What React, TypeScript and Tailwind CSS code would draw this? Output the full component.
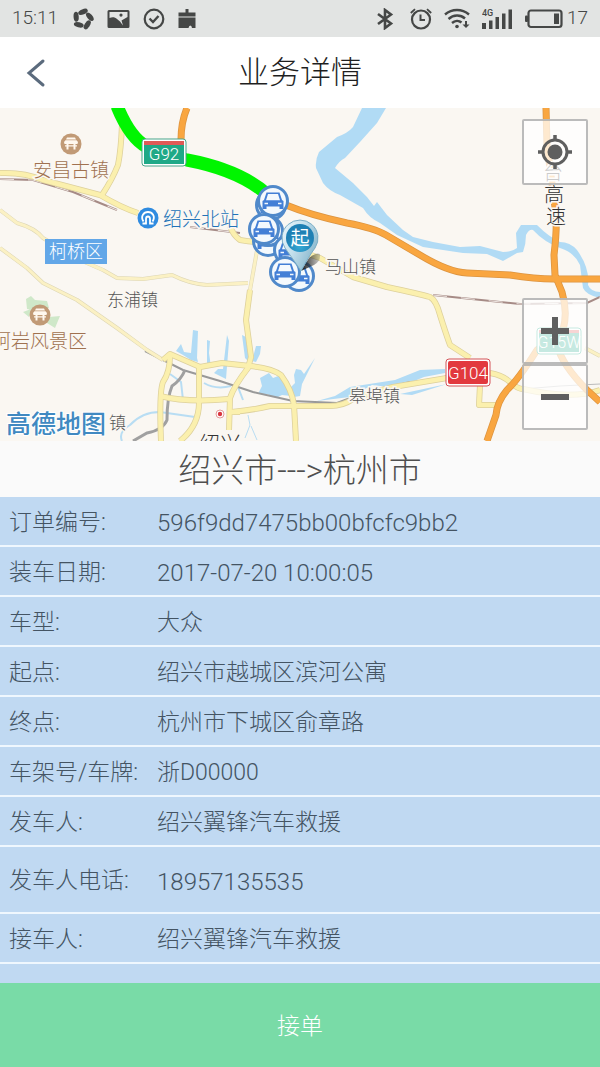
import React from 'react';

const orderRows = [
  { label: '订单编号:', value: '596f9dd7475bb00bfcfc9bb2', numeric: true },
  { label: '装车日期:', value: '2017-07-20 10:00:05', numeric: true },
  { label: '车型:', value: '大众' },
  { label: '起点:', value: '绍兴市越城区滨河公寓' },
  { label: '终点:', value: '杭州市下城区俞章路' },
  { label: '车架号/车牌:', value: '浙D00000' },
  { label: '发车人:', value: '绍兴翼锋汽车救援' },
  { label: '发车人电话:', value: '18957135535', numeric: true, tall: true },
  { label: '接车人:', value: '绍兴翼锋汽车救援' },
];

const StatusBar: React.FC = () => (
  <div className="flex h-[37px] shrink-0 items-center justify-between bg-[#e2e4e3] px-3 text-[#454746]">
    <div className="flex items-center gap-[13px]">
      <span className="w-[47px] text-[19px] whitespace-nowrap">15:11</span>
      <svg className="size-[22px]" viewBox="0 0 22 22">
        <g fill="currentColor">
          {[0, 72, 144, 216, 288].map((angle) => (
            <ellipse key={angle} cx="11" cy="3.800" rx="5" ry="2.600" transform={`rotate(${angle} 11 11) rotate(-22 11 3.800)`} />
          ))}
        </g>
      </svg>
      <svg className="h-[20px] w-[23px]" viewBox="0 0 23 20">
        <path
          fill="currentColor"
          fillRule="evenodd"
          d="M2 1 H21 Q22.500 1 22.500 2.500 V17.500 Q22.500 19 21 19 H2 Q.5 19 .5 17.500 V2.500 Q.5 1 2 1Z M2.500 3 V9 C5 8 8 8 10 10 L13 12.500 L16 16.500 L14.500 11.500 L20.500 8 V3Z M14 4.500 a1.600 1.600 0 1 1 0 3.200 a1.600 1.600 0 1 1 0-3.200Z"
        />
      </svg>
      <svg className="size-[22px]" viewBox="0 0 22 22" fill="none" stroke="currentColor">
        <circle cx="11" cy="11" r="9.300" strokeWidth="2.200" />
        <path d="M6.500 10.500 L10 14 L15.500 8" strokeWidth="2.400" />
      </svg>
      <svg className="h-[20px] w-[18px]" viewBox="0 0 18 20" fill="currentColor">
        <path d="M7.500 0 h3 v3.500 h7 v4 H.5 V3.500 h7Z M.5 8.500 h17 v10.500 h-3.500 q-.2-2.500-1.800-2.500 q-1.200 0-1.700 2.500 H.5Z" />
      </svg>
    </div>
    <div className="flex items-center">
      <svg className="mr-4 h-[22px] w-[18px]" viewBox="0 0 18 22" fill="none" stroke="currentColor" strokeWidth="2.600">
        <path d="M2 6 L15 15.500 L9 20 V2 L15 6.500 L2 16" />
      </svg>
      <svg className="mr-3 size-[22px]" viewBox="0 0 22 22" fill="none" stroke="currentColor">
        <circle cx="11" cy="11.500" r="9" strokeWidth="2.200" />
        <path d="M10.500 6.500 V12 H15" strokeWidth="2" />
        <path d="M.8 5 L5 1.200 M17 1.200 L21.200 5" strokeWidth="1.800" />
      </svg>
      <svg className="mr-3 h-[22px] w-[26px]" viewBox="0 0 26 22" fill="none" stroke="currentColor" strokeWidth="2.400">
        <path d="M1 6.500 C8 .5 18 .5 25 6.500" />
        <path d="M4.500 11 C9.500 6.500 16.500 6.500 21 10.500" />
        <path d="M8 15 C11 12.300 15 12.300 17.500 14.500" />
        <circle cx="13" cy="18.500" r="1.800" fill="currentColor" stroke="none" />
        <path d="M22 13 V17" strokeWidth="2" />
        <path d="M18.500 16.500 h7 L22 20Z" fill="currentColor" stroke="none" />
      </svg>
      <svg className="mr-3 h-[22px] w-[31px]" viewBox="0 0 31 22" fill="currentColor">
        <text x="0" y="8" fontSize="9" fontWeight="500" className="font-['Roboto',sans-serif]">4G</text>
        <path d="M0 15 h4 v6 h-4Z M7 12.500 h3.500 v8.500 h-3.500Z M13.500 9 h3.500 v12 h-3.500Z M20 5.500 h3.500 v15.500 h-3.500Z M26.500 1.500 h3.500 v19.500 h-3.500Z" />
      </svg>
      <svg className="mr-1 h-[20px] w-[38px]" viewBox="0 0 38 20">
        <rect x="3.500" y="1.500" width="33" height="16.500" rx="2.500" fill="none" stroke="currentColor" strokeWidth="2.200" />
        <rect x="0" y="6.500" width="3" height="6.500" rx="1" fill="currentColor" />
        <rect x="29" y="4.500" width="5" height="10.500" fill="currentColor" />
      </svg>
      <span className="text-[19px]">17</span>
    </div>
  </div>
);

const CarPin: React.FC<{ x: number; y: number }> = ({ x, y }) => (
  <g transform={`translate(${x} ${y})`}>
    <circle r="14.500" fill="#f4f9fd" stroke="#5089ca" strokeWidth="3" />
    <path
      fill="#437fd6"
      fillRule="evenodd"
      d="M-6.500-8.500 H6.500 L9-1 L10.500 0 V8 H6.500 V5.500 H-6.500 V8 H-10.500 V0 L-9-1Z M-5-7 L-7-.8 H7 L5-7Z M-8.500 1.700 h3.500 v1.500 h-3.500Z M5 1.700 h3.500 v1.500 h-3.500Z"
    />
  </g>
);

const TempleIcon: React.FC<{ x: number; y: number }> = ({ x, y }) => (
  <g transform={`translate(${x} ${y})`}>
    <circle r="10.500" fill="#c19a76" />
    <path d="M-4-6.500 H4 L5-4.500 H-5Z M-7-2 L-5.500-3.800 H5.500 L7-2 L6.500 0 H-6.500Z M-4.500 0 h2 v5.500 h-2Z M2.500 0 h2 v5.500 h-2Z M-6 1.200 H6 V2.500 H-6Z" fill="#fff8ef" />
  </g>
);

const yellowRoads = [
  'M0 173 Q24 172 43 180 L100 195 Q122 208 138 213',
  'M230 226 Q233 235 240 240 Q258 243 275 243 L320 258 L353 277 L387 287 Q420 294 430 297 Q436 300 440 315 Q446 334 450 345 L470 358',
  'M122 125 Q121 150 118 165 Q112 180 102 195',
  'M490 373 Q503 375 511 383 Q518 389 523 389 Q572 400 600 390',
  'M480 385 L479 405 H500',
  'M447 378 L393 387 Q366 394 353 399 Q343 406 330 406 L270 406 Q253 410 232 412',
  'M250 290 L246 320 L251 357 L248 368 Q234 386 230 398 L229 430',
  'M163 360 L170 354 L200 367 L222 363 L250 366 Q272 368 281 375 Q292 390 294 405 L296 441',
  'M170 355 Q170 372 163 382 Q159 392 161 441',
  'M199 367 V400 Q200 425 180 441',
  'M160 396 Q188 403 229 399',
  'M229 412 H240',
];

const thinRoads = [
  'M0 210 L17 223 Q35 228 43 238 L80 260 L103 270 L117 278 L143 279 L172 275 Q190 284 207 285 L248 283',
  'M0 248 L27 268 L43 283 L77 300 L117 328 L147 350 L163 360',
  'M258 245 L250 290',
  'M585 348 L600 356',
];

const orangeRoads = [
  'M187 108 Q181 122 181 140',
  'M286 205 Q310 215 347 223 Q374 228 386 235 L420 255 Q448 272 467 273 L510 275 Q535 279 554 279 L600 279',
  'M546 108 L547 145 L556 215 Q557 230 554 255 L555 275 L562 292 Q568 312 563 330 L537 350 Q518 380 507 390 Q497 402 496 415 L487 441',
  'M557 345 Q562 365 587 390 L600 402',
];

const MapDrawing: React.FC = () => (
  <svg
    className="h-full w-full font-['Roboto','Noto_Sans_CJK_SC',sans-serif]"
    viewBox="0 108 600 333"
    preserveAspectRatio="xMidYMid slice"
    role="img"
    aria-label="高德地图"
  >
    <rect x="-600" y="108" width="1800" height="333" fill="#faf7f2" />

    {/* parks */}
    <path d="M26 299 l5-3 4 4 12 1 2 7 -10 3 -12-2Z M23 312 l8-3 -2 8Z M49 317 l11-1 -5 12 -8-5Z" fill="#cfe8c9" />

    {/* water */}
    <g fill="#b1dbf5">
      <path d="M362 108 L353 127 Q348 133 337 137 L319 152 Q315 160 316 168 L323 183 Q329 191 340 195 L363 208 Q369 218 380 223 L397 235 L423 247 L463 253 L487 254 L503 261 L517 253 L523 252 Q526 244 526 235 Q529 229 533 230 Q544 242 560 248 Q574 252 580 265 L583 288 Q586 295 600 298 V292 Q591 292 588 285 Q590 268 577 250 Q570 242 560 242 Q549 237 537 225 L521 225 L516 233 L517 248 Q512 252 503 252 L480 246 L460 247 L433 242 L413 237 L403 230 L387 215 L377 202 L374 206 L367 197 L353 183 L335 168 Q339 161 345 158 L360 142 L377 123 L386 108Z" />
      <path d="M193 330 l5 1 -1 27 1 4 -7 -2 -8 -5 -7 -4 5-7 3 8 7 1Z M207 340 l3 1 -1 12 2 14 -4-3Z M227 335 l2 6 -3 38 -12-6 4-4 5 0Z M242 335 l4 2 3 25 -4-4Z M256 346 l5 0 -1 8 -4 8 -4 -1Z" />
      <path d="M260 378 l9-5 4 5 8-3 3 8 4 7 3 6 -9-1 -6 3 -9-4 -9 0 4-8Z M296 369 l5 1 3 4 11-16 -8 16 -5 10 -2 12 -6 1 -3-10 4-4 -1-8Z" />
      <path d="M317 401 L335 396 L350 387 L395 380 L420 370 L445 369 V373 L424 377 L397 388 L372 385 L350 397Z M400 394 L447 384 L412 395Z" />
    </g>
    <g fill="none" stroke="#b8ddf3" strokeWidth="2">
      <path d="M122 441 Q118 432 130 425 Q142 412 160 412 L195 417" />
      <path d="M170 374 L181 382 L183 400 M238 387 L243 400" />
      <path d="M204 383 Q216 390 231 386" />
      <path d="M248 415 L250 425 L245 438 M251 426 L257 440" strokeWidth="1" />
    </g>

    {/* railways */}
    <g fill="none">
      <path d="M0 179 L33 180 L73 192 L117 210 M190 227 L240 233 M433 295 L520 304 L587 303 L600 297" stroke="#a68b86" strokeWidth="2" />
      <path d="M0 179 L33 180 L73 192 L117 210 M190 227 L240 233 M433 295 L520 304 L587 303 L600 297" stroke="#eee6e2" strokeWidth="1" strokeDasharray="14 14" />
      <path d="M145 351 L183 370 L220 381 L253 392 L293 401 L337 403 L353 397 L410 382" stroke="#999" strokeWidth="2" />
      <path d="M185 370 Q181 380 172 386 Q167 398 167 420 Q163 430 147 433 L133 441" stroke="#a0a0a0" strokeWidth="3" />
      <path d="M523 389 L560 386 L600 384" stroke="#bbb" strokeWidth="1" />
    </g>

    {/* roads: casing first, fill above */}
    <g fill="none" strokeLinejoin="round">
      {thinRoads.map((d) => <path key={d} d={d} stroke="#dcd5b4" strokeWidth="4" />)}
      {thinRoads.map((d) => <path key={d} d={d} stroke="#fbf1c4" strokeWidth="3" />)}
      {yellowRoads.map((d) => <path key={d} d={d} stroke="#ddd09c" strokeWidth="6" />)}
      {yellowRoads.map((d) => <path key={d} d={d} stroke="#fbf0ae" strokeWidth="4.500" />)}
      {orangeRoads.map((d) => <path key={d} d={d} stroke="#dc9440" strokeWidth="7" />)}
      {orangeRoads.map((d) => <path key={d} d={d} stroke="#f9a640" strokeWidth="5.500" />)}
      <path d="M117 106 Q130 138 147 147 Q162 154 187 160 Q240 170 268 195" stroke="#00f500" strokeWidth="13" />
    </g>

    {/* road shields */}
    <g fontSize="17" textAnchor="middle" fill="#fff" fontWeight="300">
      <rect x="142" y="139" width="44" height="27" rx="3" fill="#fff" stroke="#49a58b" />
      <path d="M144 141 h40 v4 h-40Z" fill="#e05a56" />
      <path d="M144 145 h40 v19 h-40Z" fill="#1fa987" />
      <text x="164" y="160">G92</text>
      <rect x="446" y="359" width="44" height="27" rx="3" fill="#fff" stroke="#d35257" />
      <rect x="448" y="361" width="40" height="23" rx="2" fill="#e2393e" />
      <text x="468" y="379">G104</text>
      <rect x="537" y="328" width="44" height="26" rx="3" fill="#fff" stroke="#1fa987" />
      <path d="M539 330 h40 v3 h-40Z" fill="#e05a56" />
      <path d="M539 333 h40 v19 h-40Z" fill="#1fa987" />
      <text x="559" y="348" fontSize="16">G15W</text>
    </g>

    {/* places */}
    <TempleIcon x={71} y={144} />
    <TempleIcon x={40} y={315} />
    <g stroke="#faf7f2" strokeWidth="3" paintOrder="stroke" fontWeight="300">
      <g fontSize="19" fill="#a0714f">
        <text x="33" y="177">安昌古镇</text>
        <text x="-8" y="348">柯岩风景区</text>
      </g>
      <text x="163" y="226" fontSize="19" fill="#2273b8">绍兴北站</text>
      <g fontSize="17" fill="#555">
        <text x="107" y="306">东浦镇</text>
        <text x="325" y="273">马山镇</text>
        <text x="349" y="402">皋埠镇</text>
        <text x="109" y="429">镇</text>
      </g>
      <g fontSize="20" fill="#333">
        <text x="543" y="180">台</text>
        <text x="544" y="202">高</text>
        <text x="546" y="224">速</text>
        <text x="199" y="451" fontSize="21">绍兴</text>
      </g>
    </g>
    <rect x="45" y="239" width="62" height="25" fill="#62a7e8" />
    <text x="76" y="258" fontSize="18" textAnchor="middle" fill="#fff" fontWeight="300">柯桥区</text>
    <g transform="translate(148 218)">
      <circle r="10.500" fill="#2f8be0" />
      <path d="M-4.500 3.500 C-8-2-4-6 0-6 S8-2 4.500 3.500 M-5.500 5.500 H-2 V1 Q-2-1.500 0-1.500 T2 1 V5.500 H5.500" fill="none" stroke="#fff" strokeWidth="1.800" />
    </g>
    <circle cx="220" cy="414" r="4" fill="#fff" stroke="#e59a9a" />
    <circle cx="220" cy="414" r="2.200" fill="#d93640" />

    <CarPin x={271} y={205} />
    <CarPin x={273} y={201} />
    <CarPin x={268} y={241} />
    <CarPin x={268} y={231} />
    <CarPin x={264} y={229} />
    <CarPin x={289} y={250} />
    <CarPin x={299} y={276} />
    <CarPin x={285} y={272} />

    {/* starting point */}
    <defs>
      <linearGradient id="pinBody" x1="0" y1="0" x2="1" y2=".6">
        <stop offset="0" stopColor="#eef8fc" />
        <stop offset=".5" stopColor="#c3dfec" />
        <stop offset="1" stopColor="#86b6cc" />
      </linearGradient>
      <radialGradient id="pinFace" cy=".8">
        <stop offset="0" stopColor="#36a9d4" />
        <stop offset="1" stopColor="#1f80b4" />
      </radialGradient>
      <linearGradient id="pinShadow">
        <stop offset="0" stopColor="#222" />
        <stop offset="1" stopColor="#222" stopOpacity=".2" />
      </linearGradient>
    </defs>
    <path d="M301 271 L309 258 Q316 252 320 254 Q321 261 314 265Z" fill="url(#pinShadow)" />
    <path d="M301 271 Q295 262 285 248 A18 18 0 1 1 315 248 Q309 256 301 271Z" fill="url(#pinBody)" stroke="#7badc5" />
    <circle cx="300" cy="238" r="14" fill="url(#pinFace)" />
    <text x="300" y="245" fontSize="19" fontWeight="400" textAnchor="middle" fill="#fff">起</text>

    <text x="6" y="433" fontSize="25" fontWeight="500" fill="#4089c1" stroke="#fff" strokeWidth="2" paintOrder="stroke">高德地图</text>
  </svg>
);

const MAP_BUTTON = 'flex size-[66px] items-center justify-center rounded-xs border-2 border-[#aaa]/80 bg-white/75 text-[#5f5f5f]';

const OrderMap: React.FC = () => (
  <section className="relative h-[333px] shrink-0 overflow-hidden">
    <MapDrawing />
    <div className="absolute inset-y-0 right-3 flex flex-col justify-between py-[11px]">
      <button type="button" aria-label="定位" className={MAP_BUTTON}>
        <svg className="size-[34px]" viewBox="0 0 34 34" fill="none" stroke="currentColor">
          <circle cx="17" cy="17" r="12" strokeWidth="3" />
          <circle cx="17" cy="17" r="7.500" fill="currentColor" stroke="none" />
          <path d="M17 0 V6 M17 28 V34 M0 17 H6 M28 17 H34" strokeWidth="3.500" />
        </svg>
      </button>
      <div className="flex flex-col">
        <button type="button" aria-label="放大" className={MAP_BUTTON}>
          <svg className="size-[28px]" viewBox="0 0 28 28" stroke="currentColor" strokeWidth="6">
            <path d="M0 14 H28 M14 0 V28" />
          </svg>
        </button>
        <button type="button" aria-label="缩小" className={MAP_BUTTON}>
          <svg className="size-[28px]" viewBox="0 0 28 28" stroke="currentColor" strokeWidth="6">
            <path d="M0 14 H28" />
          </svg>
        </button>
      </div>
    </div>
  </section>
);

const App: React.FC = () => {
  return (
    <div className="flex h-screen w-full flex-col overflow-hidden bg-white font-['Roboto','Noto_Sans_CJK_SC',sans-serif] font-light">
      <StatusBar />

      <header className="grid h-[71px] shrink-0 grid-cols-[72px_1fr_72px] items-center bg-white">
        <button type="button" aria-label="返回" className="flex h-full items-center justify-center text-[#5b6b7d]">
          <svg className="h-[30px] w-[20px]" viewBox="0 0 20 30" fill="none" stroke="currentColor" strokeWidth="3" strokeLinecap="round">
            <path d="M17 3 L3 15 L17 27" />
          </svg>
        </button>
        <h1 className="pt-0.5 text-center text-[31px] text-[#1f1f1f]">业务详情</h1>
      </header>

      <OrderMap />

      <h2 className="flex h-[56px] shrink-0 items-center justify-center bg-[#fafafa] pt-1 text-[33px] text-[#4f4f4f]">
        绍兴市---&gt;杭州市
      </h2>

      <dl className="min-h-0 flex-1 overflow-hidden bg-[#c0d9f2] text-[23px] text-[#445463]">
        {orderRows.map((row) => (
          <div
            key={row.label}
            className={`flex items-center border-b-2 border-[#eff7fe] px-[9px] pt-1 ${row.tall ? 'h-[67px]' : 'h-[50px]'}`}
          >
            <dt className="w-[148px] shrink-0 whitespace-nowrap">{row.label}</dt>
            <dd className={`flex-1 truncate ${row.numeric ? 'text-2xl' : ''}`}>{row.value}</dd>
          </div>
        ))}
      </dl>

      <button type="button" className="h-[84px] shrink-0 bg-[#79dba7] pt-1 text-[23px] text-white">
        接单
      </button>
    </div>
  );
};

export default App;
